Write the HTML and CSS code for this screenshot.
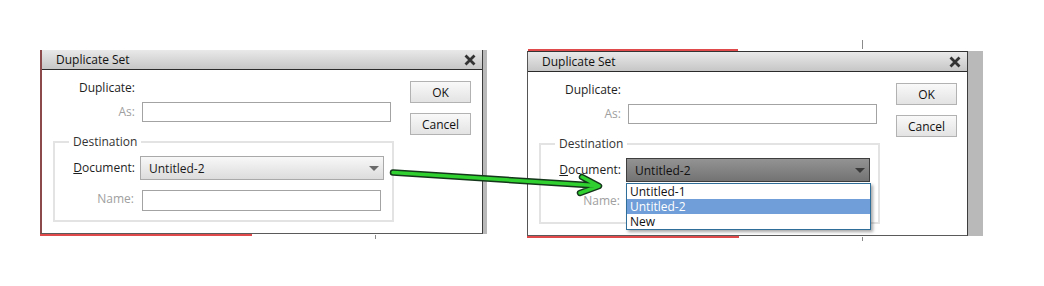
FILE: index.html
```html
<!DOCTYPE html>
<html lang="en">
<head>
  <meta charset="UTF-8">
  <title>Duplicate Set</title>
  <link rel="stylesheet" href="styles.css">
</head>
<body>
  <div class="page">
    <div class="shot shot-left">
      <div class="frame">
        <div class="dialog">
          <div class="title-bar">
            <div class="title">Duplicate Set</div>
            <svg class="close" width="12" height="12" viewBox="0 0 12 12"><path d="M1.5 1.5 L10.5 10.5 M10.5 1.5 L1.5 10.5" stroke="#333" stroke-width="2.8"/></svg>
          </div>
          <div class="dialog-body">
            <div class="form">
              <div class="row row-duplicate"><div class="label">Duplicate:</div></div>
              <div class="row row-as">
                <div class="label muted">As:</div>
                <div class="input"></div>
              </div>
              <fieldset class="group">
                <legend>Destination</legend>
                <div class="row row-doc">
                  <div class="label label-doc"><u>D</u>ocument:</div>
                  <div class="select">
                    <span>Untitled-2</span>
                    <span class="caret"></span>
                  </div>
                </div>
                <div class="row row-name">
                  <div class="label label-name muted">Name:</div>
                  <div class="input input-name"></div>
                </div>
              </fieldset>
            </div>
            <div class="buttons">
              <button class="button">OK</button>
              <button class="button">Cancel</button>
            </div>
          </div>
        </div>
        <div class="side-bar"></div>
      </div>
      <div class="edge"></div>
    </div>

    <div class="shot shot-right">
      <div class="edge edge-top"></div>
      <div class="frame">
        <div class="dialog">
          <div class="title-bar">
            <div class="title">Duplicate Set</div>
            <svg class="close" width="12" height="12" viewBox="0 0 12 12"><path d="M1.5 1.5 L10.5 10.5 M10.5 1.5 L1.5 10.5" stroke="#333" stroke-width="2.8"/></svg>
          </div>
          <div class="dialog-body">
            <div class="form">
              <div class="row row-duplicate"><div class="label">Duplicate:</div></div>
              <div class="row row-as">
                <div class="label muted">As:</div>
                <div class="input"></div>
              </div>
              <fieldset class="group">
                <legend>Destination</legend>
                <div class="row row-doc">
                  <div class="label label-doc"><u>D</u>ocument:</div>
                  <div class="select select-open">
                    <span>Untitled-2</span>
                    <span class="caret"></span>
                    <div class="dropdown">
                      <div class="option">Untitled-1</div>
                      <div class="option selected">Untitled-2</div>
                      <div class="option">New</div>
                    </div>
                  </div>
                </div>
                <div class="row row-name">
                  <div class="label label-name muted">Name:</div>
                  <div class="input input-name"></div>
                </div>
              </fieldset>
            </div>
            <div class="buttons">
              <button class="button">OK</button>
              <button class="button">Cancel</button>
            </div>
          </div>
        </div>
        <div class="side-bar"></div>
      </div>
      <div class="edge"></div>
    </div>

    <svg class="arrow" width="1044" height="286" viewBox="0 0 1044 286">
      <g fill="none" stroke-linecap="round" stroke-linejoin="round">
        <path d="M393 172.5 L595 185.5 M582 177 L599 186 L580 193" stroke="#14361a" stroke-width="6.5"/>
        <path d="M393 172.5 L595 185.5 M582 177 L599 186 L580 193" stroke="#2fd02f" stroke-width="3.5"/>
      </g>
    </svg>
  </div>
</body>
</html>
```

FILE: styles.css
```css
* {
  margin: 0;
  padding: 0;
  box-sizing: border-box;
}

body {
  background-color: #ffffff;
  font-family: 'Open Sans', 'Segoe UI', sans-serif;
  font-size: 12px;
  color: #1e1e1e;
  overflow: hidden;
}

.page {
  position: relative;
  display: flex;
  align-items: flex-start;
  gap: 40px;
  padding: 50px 0 0 40px;
  height: 286px;
}

.shot {
  position: relative;
}

.shot-right {
  margin-top: -1px;
}

.shot::after {
  content: "";
  position: absolute;
  left: 335px;
  bottom: -3px;
  width: 1px;
  height: 4px;
  background-color: #8a8a8a;
}

.shot-right::before {
  content: "";
  position: absolute;
  left: 335px;
  top: -9px;
  width: 1px;
  height: 9px;
  background-color: #8a8a8a;
}

.frame {
  display: flex;
}

.dialog {
  width: 443px;
  background-color: #ffffff;
  border-left: 2px solid #8c4a4a;
  border-right: 1px solid #3c3c3c;
  border-bottom: 1px solid #5a5a5a;
}

.shot-right .dialog {
  width: 441px;
  border-left: 1px solid #555555;
  border-top: 1px solid #333333;
}

.side-bar {
  width: 4px;
  background-color: #b9b9b9;
}

.shot-right .side-bar {
  width: 15px;
}

.edge {
  width: 212px;
  height: 2px;
  background-color: #e04a4a;
}

.edge-top {
  width: 210px;
  margin-left: 1px;
}

.title-bar {
  height: 20px;
  display: flex;
  align-items: center;
  justify-content: space-between;
  padding: 0 6px 0 14px;
  background: linear-gradient(#e9e9e9, #c6c6c6);
  border-bottom: 1px solid #2b2b2b;
}

.title {
  color: #111111;
}

.close {
  display: block;
}

.dialog-body {
  display: flex;
  height: 163px;
}

.form {
  width: 352px;
}

.row {
  display: flex;
  align-items: center;
}

.label {
  width: 93px;
  text-align: right;
  line-height: 16px;
  white-space: nowrap;
}

.muted {
  color: #a0a0a0;
}

.row-duplicate {
  margin-top: 10px;
}

.row-as {
  margin-top: 6px;
  gap: 7px;
}

.input {
  width: 249px;
  height: 20px;
  border: 1px solid #a3a3a3;
  background-color: #ffffff;
}

.group {
  margin: 12px 0 0 11px;
  width: 341px;
  border: 2px solid #e3e3e3;
  padding: 0 0 9px;
  min-width: 0;
}

.group legend {
  margin-left: 14px;
  padding: 0 4px;
  line-height: 16px;
  color: #333333;
}

.row-doc {
  margin-top: 6px;
  gap: 5px;
}

.label-doc {
  width: 80px;
}

.select {
  position: relative;
  width: 244px;
  height: 24px;
  display: flex;
  align-items: center;
  justify-content: space-between;
  padding: 0 4px 0 8px;
  border: 1px solid #a9a9a9;
  background: linear-gradient(#f8f8f8, #dcdcdc);
  color: #1a1a1a;
}

.caret {
  width: 0;
  height: 0;
  border-left: 5px solid transparent;
  border-right: 5px solid transparent;
  border-top: 5px solid #6a6a6a;
}

.select-open {
  border-color: #3e3e3e;
  background: linear-gradient(#939393, #737373);
  color: #111111;
}

.select-open .caret {
  border-top-color: #3a3a3a;
}

.dropdown {
  position: absolute;
  left: -1px;
  top: calc(100% + 2px);
  width: 245px;
  border: 1px solid #2f6e99;
  background-color: #ffffff;
  box-shadow: 2px 2px 3px rgba(0, 0, 0, 0.35);
  z-index: 5;
}

.option {
  height: 15px;
  line-height: 15px;
  padding-left: 3px;
  color: #111111;
}

.option.selected {
  background-color: #6f9ed8;
  color: #ffffff;
}

.row-name {
  margin-top: 10px;
  gap: 8px;
  align-items: flex-start;
}

.label-name {
  width: 79px;
  margin-top: 1px;
}

.input-name {
  width: 239px;
  height: 21px;
}

.buttons {
  margin-left: 16px;
  padding-top: 11px;
  display: flex;
  flex-direction: column;
  gap: 10px;
}

.button {
  width: 61px;
  height: 22px;
  border: 1px solid #b2b2b2;
  background: linear-gradient(#f9f9f9, #e3e3e3);
  font: inherit;
  color: #111111;
}

.arrow {
  position: absolute;
  left: 0;
  top: 0;
  pointer-events: none;
  z-index: 10;
}
```
